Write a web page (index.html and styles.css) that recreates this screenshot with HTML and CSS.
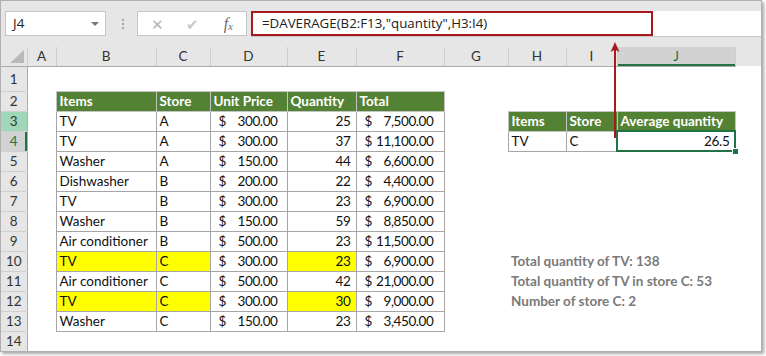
FILE: index.html
```html
<html>
  <head>
    <meta charset="UTF-8" />
    <meta name="viewport" content="width=device-width, initial-scale=1.0" />
    <link rel="stylesheet" href="styles.css">
  </head>
  <body>
    <div class="window">
      <!-- Formula bar -->
      <div class="toolbar">
        <div class="nameBox">J4<span class="dropArrow"></span></div>
        <div class="dots"><i></i><i></i><i></i></div>
        <div class="fxBox">
          <span class="cancel">&#x2715;</span>
          <span class="enter">&#x2714;</span>
          <span class="fx">f<sub>x</sub></span>
        </div>
        <div class="formula">
          <div class="formulaText">=DAVERAGE(B2:F13,"quantity",H3:I4)</div>
        </div>
      </div>

      <table class="sheet">
        <colgroup>
          <col style="width: 26px" />
          <col style="width: 29px" />
          <col style="width: 100px" />
          <col style="width: 54px" />
          <col style="width: 77px" />
          <col style="width: 69px" />
          <col style="width: 88px" />
          <col style="width: 64px" />
          <col style="width: 58px" />
          <col style="width: 51px" />
          <col style="width: 118px" />
          <col />
        </colgroup>
        <tr class="colHeads">
          <th class="corner"><span></span></th>
          <th>A</th><th>B</th><th>C</th><th>D</th><th>E</th><th>F</th>
          <th>G</th><th>H</th><th>I</th><th class="selCol">J</th>
          <th class="filler"></th>
        </tr>
        <tr class="firstRow">
          <th class="rowHead">1</th>
          <td></td><td></td><td></td><td></td><td></td><td></td><td></td><td></td><td></td><td></td><td></td>
        </tr>
        <tr>
          <th class="rowHead">2</th>
          <td></td>
          <td class="cell head">Items</td>
          <td class="cell head">Store</td>
          <td class="cell head">Unit Price</td>
          <td class="cell head">Quantity</td>
          <td class="cell head">Total</td>
          <td></td><td></td><td></td><td></td><td></td>
        </tr>
        <tr>
          <th class="rowHead hlRow">3</th>
          <td></td>
          <td class="cell">TV</td>
          <td class="cell">A</td>
          <td class="cell"><div class="acct"><span>$</span><span>300.00</span></div></td>
          <td class="cell num">25</td>
          <td class="cell"><div class="acct total"><span>$</span><span>7,500.00</span></div></td>
          <td></td>
          <td class="cell head">Items</td>
          <td class="cell head">Store</td>
          <td class="cell head">Average quantity</td>
          <td></td>
        </tr>
        <tr>
          <th class="rowHead selRow">4</th>
          <td></td>
          <td class="cell">TV</td>
          <td class="cell">A</td>
          <td class="cell"><div class="acct"><span>$</span><span>300.00</span></div></td>
          <td class="cell num">37</td>
          <td class="cell"><div class="acct total"><span>$</span><span>11,100.00</span></div></td>
          <td></td>
          <td class="cell">TV</td>
          <td class="cell">C</td>
          <td class="cell num active">26.5</td>
          <td></td>
        </tr>
        <tr>
          <th class="rowHead">5</th>
          <td></td>
          <td class="cell">Washer</td>
          <td class="cell">A</td>
          <td class="cell"><div class="acct"><span>$</span><span>150.00</span></div></td>
          <td class="cell num">44</td>
          <td class="cell"><div class="acct total"><span>$</span><span>6,600.00</span></div></td>
          <td></td><td></td><td></td><td></td><td></td>
        </tr>
        <tr>
          <th class="rowHead">6</th>
          <td></td>
          <td class="cell">Dishwasher</td>
          <td class="cell">B</td>
          <td class="cell"><div class="acct"><span>$</span><span>200.00</span></div></td>
          <td class="cell num">22</td>
          <td class="cell"><div class="acct total"><span>$</span><span>4,400.00</span></div></td>
          <td></td><td></td><td></td><td></td><td></td>
        </tr>
        <tr>
          <th class="rowHead">7</th>
          <td></td>
          <td class="cell">TV</td>
          <td class="cell">B</td>
          <td class="cell"><div class="acct"><span>$</span><span>300.00</span></div></td>
          <td class="cell num">23</td>
          <td class="cell"><div class="acct total"><span>$</span><span>6,900.00</span></div></td>
          <td></td><td></td><td></td><td></td><td></td>
        </tr>
        <tr>
          <th class="rowHead">8</th>
          <td></td>
          <td class="cell">Washer</td>
          <td class="cell">B</td>
          <td class="cell"><div class="acct"><span>$</span><span>150.00</span></div></td>
          <td class="cell num">59</td>
          <td class="cell"><div class="acct total"><span>$</span><span>8,850.00</span></div></td>
          <td></td><td></td><td></td><td></td><td></td>
        </tr>
        <tr>
          <th class="rowHead">9</th>
          <td></td>
          <td class="cell">Air conditioner</td>
          <td class="cell">B</td>
          <td class="cell"><div class="acct"><span>$</span><span>500.00</span></div></td>
          <td class="cell num">23</td>
          <td class="cell"><div class="acct total"><span>$</span><span>11,500.00</span></div></td>
          <td></td><td></td><td></td><td></td><td></td>
        </tr>
        <tr>
          <th class="rowHead">10</th>
          <td></td>
          <td class="cell yellow">TV</td>
          <td class="cell yellow">C</td>
          <td class="cell"><div class="acct"><span>$</span><span>300.00</span></div></td>
          <td class="cell num yellow">23</td>
          <td class="cell"><div class="acct total"><span>$</span><span>6,900.00</span></div></td>
          <td></td>
          <td class="note">Total quantity of TV: 138</td>
          <td></td><td></td><td></td>
        </tr>
        <tr>
          <th class="rowHead">11</th>
          <td></td>
          <td class="cell">Air conditioner</td>
          <td class="cell">C</td>
          <td class="cell"><div class="acct"><span>$</span><span>500.00</span></div></td>
          <td class="cell num">42</td>
          <td class="cell"><div class="acct total"><span>$</span><span>21,000.00</span></div></td>
          <td></td>
          <td class="note">Total quantity of TV in store C: 53</td>
          <td></td><td></td><td></td>
        </tr>
        <tr>
          <th class="rowHead">12</th>
          <td></td>
          <td class="cell yellow">TV</td>
          <td class="cell yellow">C</td>
          <td class="cell"><div class="acct"><span>$</span><span>300.00</span></div></td>
          <td class="cell num yellow">30</td>
          <td class="cell"><div class="acct total"><span>$</span><span>9,000.00</span></div></td>
          <td></td>
          <td class="note">Number of store C: 2</td>
          <td></td><td></td><td></td>
        </tr>
        <tr>
          <th class="rowHead">13</th>
          <td></td>
          <td class="cell">Washer</td>
          <td class="cell">C</td>
          <td class="cell"><div class="acct"><span>$</span><span>150.00</span></div></td>
          <td class="cell num">23</td>
          <td class="cell"><div class="acct total"><span>$</span><span>3,450.00</span></div></td>
          <td></td><td></td><td></td><td></td><td></td>
        </tr>
        <tr>
          <th class="rowHead">14</th>
          <td></td><td></td><td></td><td></td><td></td><td></td><td></td><td></td><td></td><td></td><td></td>
        </tr>
      </table>

      <!-- annotation arrow from formula to J4 -->
      <svg class="arrow" width="12" height="100" viewBox="0 0 12 100">
        <line x1="6" y1="8" x2="6" y2="97" stroke="#a8191c" stroke-width="2" />
        <polygon points="6,1 10.5,11 6,8.5 1.5,11" fill="#a8191c" />
      </svg>
    </div>
  </body>
</html>
```

FILE: styles.css
```css
body {
  margin: 0;
  background-color: #ffffff;
  font-family: "Open Sans", sans-serif;
}

.window {
  position: relative;
  width: 762px;
  height: 352px;
  box-sizing: border-box;
  border: 1px solid #b0b0b0;
  background-color: #ffffff;
  box-shadow: 2px 2px 3px rgba(0, 0, 0, 0.35);
  overflow: hidden;
}

/* Formula bar */
.toolbar {
  display: flex;
  align-items: flex-start;
  height: 46px;
  padding: 10px 0 0 4px;
  box-sizing: border-box;
  background-color: #e6e6e6;
}

.nameBox {
  position: relative;
  width: 101px;
  height: 25px;
  box-sizing: border-box;
  border: 1px solid #c6c6c6;
  background-color: #ffffff;
  padding-left: 7px;
  font-size: 13.5px;
  line-height: 23px;
  color: #222;
}

.dropArrow {
  position: absolute;
  right: 6px;
  top: 10px;
  border-left: 4px solid transparent;
  border-right: 4px solid transparent;
  border-top: 4px solid #777;
}

.dots {
  display: flex;
  flex-direction: column;
  gap: 2px;
  margin: 8px 13px 0 16px;
}
.dots i {
  width: 2px;
  height: 2px;
  background-color: #a6a6a6;
}

.fxBox {
  display: flex;
  align-items: center;
  width: 110px;
  height: 25px;
  box-sizing: border-box;
  border: 1px solid #c6c6c6;
  background-color: #ffffff;
}
.fxBox span {
  width: 37px;
  text-align: center;
}
.cancel {
  color: #b4b4b4;
  font-size: 15px;
  padding-left: 2px;
}
.enter {
  color: #c8c8c8;
  font-size: 15px;
}
.fx {
  font-family: "Liberation Serif", serif;
  font-style: italic;
  font-size: 16px;
  color: #6a6a6a;
}
.fx sub {
  font-size: 11px;
  vertical-align: -1px;
}

.formula {
  flex: 1;
  height: 26px;
  margin-left: 4px;
  box-sizing: border-box;
  background-color: #ffffff;
  border-bottom: 1px solid #c6c6c6;
}
.formulaText {
  width: 402px;
  height: 25px;
  box-sizing: border-box;
  border: 2px solid #a8191c;
  padding-left: 9px;
  font-size: 13.3px;
  line-height: 20px;
  color: #222;
  white-space: nowrap;
}

/* Sheet grid */
.sheet {
  border-collapse: collapse;
  table-layout: fixed;
  width: 760px;
  font-family: Lato, "Open Sans", sans-serif;
  font-size: 13.5px;
  color: #111;
}

.sheet th {
  font-weight: normal;
  font-size: 13.5px;
  color: #333;
  padding: 0;
}

.colHeads th {
  height: 19px;
  background-color: #e6e6e6;
  border-bottom: 1px solid #ababab;
  border-right: 1px solid #cfcfcf;
  text-align: center;
  line-height: 18px;
}
.colHeads .filler {
  border-right: none;
  border-bottom: none;
}

.corner {
  position: relative;
}
.corner span {
  position: absolute;
  right: 3px;
  bottom: 3px;
  border-left: 14px solid transparent;
  border-bottom: 13px solid #b9b9b9;
}

.selCol {
  background-color: #d2d2d2 !important;
  color: #217346 !important;
  box-shadow: inset 0 -2px 0 #217346;
}

.rowHead {
  height: 20px;
  background-color: #e6e6e6;
  border-right: 1px solid #ababab;
  border-bottom: 1px solid #cfcfcf;
  text-align: center;
}
.firstRow .rowHead {
  height: 25px;
}
.hlRow {
  background-color: #a0d7b9;
}
.selRow {
  background-color: #d2d2d2;
  color: #217346 !important;
  box-shadow: inset -2px 0 0 #217346;
}

.sheet td {
  padding: 0 3px;
  height: 20px;
  white-space: nowrap;
  overflow: visible;
  line-height: 18px;
}

.cell {
  border: 1px solid #a6a6a6;
}
.head {
  background-color: #548235;
  color: #ffffff;
  font-weight: bold;
  border-color: #c4c4c4;
}
.yellow {
  background-color: #ffff00;
}
.num {
  text-align: right;
  letter-spacing: -0.3px;
}
.sheet td.num {
  padding-right: 5px;
}

.acct {
  display: flex;
  justify-content: space-between;
  padding: 0 6px 0 5px;
  letter-spacing: -0.4px;
}
.acct.total {
  padding-right: 7px;
}

.active {
  position: relative;
  outline: 2px solid #217346;
  outline-offset: -1px;
}
.active::after {
  content: "";
  position: absolute;
  right: -4px;
  bottom: -4px;
  width: 5px;
  height: 5px;
  background-color: #217346;
  border: 1px solid #ffffff;
}

.note {
  color: #7a7a7a;
  font-weight: bold;
}

.arrow {
  position: absolute;
  left: 608px;
  top: 40px;
}
```
